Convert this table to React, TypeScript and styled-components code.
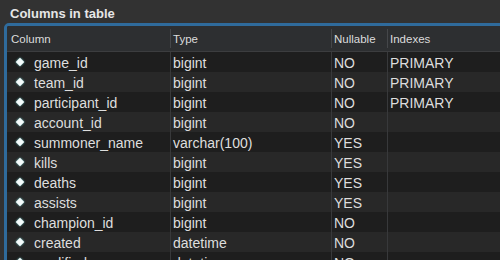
import React from "react";
import styled, { createGlobalStyle } from "styled-components";

const Global = createGlobalStyle`
  html, body { margin: 0; padding: 0; background: #323232; overflow: hidden; }
  body { font-family: "Liberation Sans", Arial, sans-serif; -webkit-font-smoothing: antialiased; }
`;

const Page = styled.div`
  width: 500px;
  height: 260px;
  overflow: hidden;
  background: #323232;
  display: flex;
  flex-direction: column;
`;

const Title = styled.div`
  font-weight: bold;
  font-size: 13px;
  color: #e6e6e6;
  padding: 6px 0 0 10px;
  height: 17px;
  line-height: 15px;
  flex: none;
`;

const Panel = styled.div`
  flex: none;
  margin-left: 4px;
  width: 520px;
  border: 3px solid #2f6b9c;
  border-radius: 5px;
  background: #1e1e1e;
  overflow: hidden;
`;

const COLS = "163px 161px 56px 1fr";

const HeaderRow = styled.div`
  display: grid;
  grid-template-columns: ${COLS};
  height: 26px;
  box-sizing: border-box;
  background: #2d2f31;
  border-bottom: 1px solid #3c3d3f;
`;

const HeaderCell = styled.div<{ $first?: boolean }>`
  font-size: 11.5px;
  color: #dcdcdc;
  display: flex;
  align-items: center;
  padding-left: ${(p) => (p.$first ? "4px" : "2px")};
  border-left: ${(p) => (p.$first ? "none" : "1px solid #45474a")};
  margin: 3px 0;
`;

const Row = styled.div<{ $alt: boolean }>`
  display: grid;
  grid-template-columns: ${COLS};
  height: 20px;
  background: ${(p) => (p.$alt ? "#282828" : "#1e1e1e")};
`;

const Cell = styled.div<{ $first?: boolean }>`
  font-size: 14px;
  color: #dedede;
  display: flex;
  align-items: center;
  padding-left: ${(p) => (p.$first ? "10px" : "2px")};
  padding-top: 1px;
  border-left: ${(p) => (p.$first ? "none" : "1px solid #38393b")};
  white-space: nowrap;
  overflow: hidden;
`;

const Diamond = styled.span`
  width: 6px;
  height: 6px;
  background: #f4fbfb;
  transform: rotate(45deg);
  margin-right: 11px;
  margin-top: -1px;
  box-shadow: 0 0 2px #7fd9d9;
  flex: none;
`;

const rows: [string, string, string, string][] = [
  ["game_id", "bigint", "NO", "PRIMARY"],
  ["team_id", "bigint", "NO", "PRIMARY"],
  ["participant_id", "bigint", "NO", "PRIMARY"],
  ["account_id", "bigint", "NO", ""],
  ["summoner_name", "varchar(100)", "YES", ""],
  ["kills", "bigint", "YES", ""],
  ["deaths", "bigint", "YES", ""],
  ["assists", "bigint", "YES", ""],
  ["champion_id", "bigint", "NO", ""],
  ["created", "datetime", "NO", ""],
  ["modified", "datetime", "NO", ""],
];

export default function App() {
  return (
    <Page>
      <Global />
      <Title>Columns in table</Title>
      <Panel>
        <HeaderRow>
          <HeaderCell $first>Column</HeaderCell>
          <HeaderCell>Type</HeaderCell>
          <HeaderCell>Nullable</HeaderCell>
          <HeaderCell>Indexes</HeaderCell>
        </HeaderRow>
        {rows.map((r, i) => (
          <Row key={r[0]} $alt={i % 2 === 1}>
            <Cell $first>
              <Diamond />
              {r[0]}
            </Cell>
            <Cell>{r[1]}</Cell>
            <Cell>{r[2]}</Cell>
            <Cell>{r[3]}</Cell>
          </Row>
        ))}
      </Panel>
    </Page>
  );
}
